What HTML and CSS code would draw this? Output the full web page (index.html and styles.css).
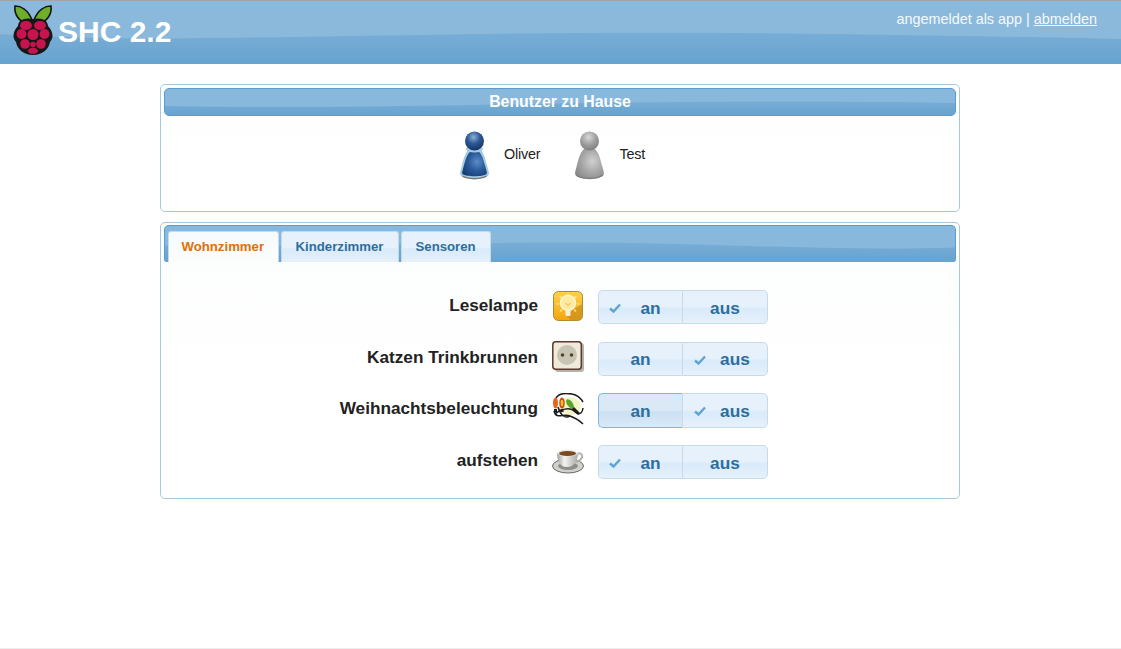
FILE: index.html
```html
<!DOCTYPE html>
<html lang="de">
<head>
<meta charset="UTF-8">
<title>SHC 2.2</title>
<link rel="stylesheet" href="styles.css">
</head>
<body>
<svg width="0" height="0" class="defs">
	<defs>
		<linearGradient id="waveFill" x1="0" y1="0" x2="0" y2="1"><stop offset="0" stop-color="#78add5"/><stop offset="1" stop-color="#66a3d0"/></linearGradient>
		<radialGradient id="blueHead" cx="0.45" cy="0.3" r="0.75"><stop offset="0" stop-color="#8fb0d6"/><stop offset="0.45" stop-color="#2c5a98"/><stop offset="1" stop-color="#14305c"/></radialGradient>
		<radialGradient id="blueBody" cx="0.6" cy="0.45" r="0.7"><stop offset="0" stop-color="#5c8cc4"/><stop offset="0.5" stop-color="#2a5a9a"/><stop offset="1" stop-color="#163a70"/></radialGradient>
		<radialGradient id="greyHead" cx="0.45" cy="0.3" r="0.75"><stop offset="0" stop-color="#d8d8d8"/><stop offset="0.55" stop-color="#9c9c9c"/><stop offset="1" stop-color="#7a7a7a"/></radialGradient>
		<radialGradient id="greyBody" cx="0.6" cy="0.45" r="0.7"><stop offset="0" stop-color="#d0d0d0"/><stop offset="0.55" stop-color="#a4a4a4"/><stop offset="1" stop-color="#868686"/></radialGradient>
		<linearGradient id="bulbBg" x1="0" y1="0" x2="0" y2="1"><stop offset="0" stop-color="#ffd24a"/><stop offset="1" stop-color="#f5a40c"/></linearGradient>
		<linearGradient id="cupBody" x1="0" y1="0" x2="1" y2="0"><stop offset="0" stop-color="#9c9c98"/><stop offset="0.35" stop-color="#f4f4f2"/><stop offset="1" stop-color="#a8a8a4"/></linearGradient>
	</defs>
</svg>

<div class="header">
	<svg class="wave" viewBox="0 0 1121 63" preserveAspectRatio="none">
		<path d="M0 33 C120 41 260 36 420 34 C620 30 800 31 1121 38 L1121 63 L0 63Z" fill="url(#waveFill)"/>
	</svg>
	<div class="logo">
		<svg width="40" height="50" viewBox="0 0 40 50">
			<path d="M19 15C15 5 8 1 2 1C1 9 6 17 13 17C15 17 17 16 19 15Z" fill="#6fae2a" stroke="#141414" stroke-width="1.600"/>
			<path d="M21 15C25 5 32 1 38 1C39 9 34 17 27 17C25 17 23 16 21 15Z" fill="#6fae2a" stroke="#141414" stroke-width="1.600"/>
			<path d="M20 14C28 12 35 15 35 21C40 26 41 33 37 37C36 44 29 50 20 50C11 50 4 44 3 37C-1 33 0 26 5 21C5 15 12 12 20 14Z" fill="#171717"/>
			<ellipse cx="13" cy="20.500" rx="6" ry="4.500" fill="#c8144e"/>
			<ellipse cx="27" cy="20.500" rx="6" ry="4.500" fill="#c8144e"/>
			<circle cx="20" cy="29.500" r="5.500" fill="#c8144e"/>
			<circle cx="8.500" cy="29" r="5" fill="#c8144e"/>
			<circle cx="31.500" cy="29" r="5" fill="#c8144e"/>
			<circle cx="12" cy="39" r="4.800" fill="#c8144e"/>
			<circle cx="28" cy="39" r="4.800" fill="#c8144e"/>
			<circle cx="20" cy="39.500" r="2.800" fill="#c8144e"/>
			<ellipse cx="20" cy="45.800" rx="5" ry="3" fill="#c8144e"/>
		</svg>
		<h1>SHC 2.2</h1>
	</div>
	<div class="login">angemeldet als app | <a href="#">abmelden</a></div>
</div>

<div class="box box-users">
	<div class="box-title">
		<svg class="wave" viewBox="0 0 790 26" preserveAspectRatio="none"><path d="M0 17C150 20 300 16 420 14C560 12 680 12 790 14L790 26L0 26Z" fill="url(#waveFill)"/></svg>
		<span>Benutzer zu Hause</span>
	</div>
	<div class="users">
		<div class="user">
			<svg width="32" height="50" viewBox="1.500 0 32 50">
				<path d="M16 17C7 17 5 30 3 37C2 41 1 43 2 45C5 50 27 50 30 45C31 43 30 41 29 37C27 30 25 17 16 17Z" fill="#a4cbdf"/>
				<path d="M16 20C9 20 7 30 5 37C4 41 3 43 4 44C7 47 25 47 28 44C29 43 28 41 27 37C25 30 23 20 16 20Z" fill="url(#blueBody)"/>
				<path d="M4 46C9 49.500 23 49.500 28 46" fill="none" stroke="#777" stroke-width="1.500"/>
				<ellipse cx="16" cy="19" rx="8.500" ry="3.500" fill="#a4cbdf"/>
				<circle cx="16" cy="11" r="9.500" fill="url(#blueHead)"/>
			</svg>
			<span>Oliver</span>
		</div>
		<div class="user">
			<svg width="32" height="50" viewBox="1.500 0 32 50">
				<path d="M16 17C7 17 5 30 3 37C2 41 1 43 2 45C5 50 27 50 30 45C31 43 30 41 29 37C27 30 25 17 16 17Z" fill="url(#greyBody)"/>
				<path d="M3 45C8 49.500 24 49.500 29 45" fill="none" stroke="#7e7e7e" stroke-width="1.500"/>
				<circle cx="16" cy="11" r="9.500" fill="url(#greyHead)"/>
			</svg>
			<span>Test</span>
		</div>
	</div>
</div>

<div class="box box-rooms">
	<div class="tabbar">
		<svg class="wave" viewBox="0 0 792 37" preserveAspectRatio="none"><path d="M0 20C200 22 300 16 420 17C560 18 680 26 792 22L792 37L0 37Z" fill="url(#waveFill)"/></svg>
		<a class="tab tab-active" href="#">Wohnzimmer</a>
		<a class="tab" href="#">Kinderzimmer</a>
		<a class="tab" href="#">Sensoren</a>
	</div>
	<div class="rows">
		<div class="row-label">Leselampe</div>
		<svg class="row-icon" width="32" height="32" viewBox="0 0 32 32">
			<rect x="1.500" y="1.500" width="29" height="29" rx="5" fill="url(#bulbBg)" stroke="#a88a3c"/>
			<path d="M20 20L30.500 14V26Q30.500 30.500 26 30.500H19L15 26Z" fill="#c98f1e" opacity="0.7"/>
			<path d="M16 3V6M8 6L10 9M24 6L22 9M4.500 14H7M25 14H27.500M8 21.500L10 19.500M24 21.500L22 19.500" stroke="#ffe690" stroke-width="1.500"/>
			<circle cx="16" cy="13" r="7.500" fill="#ffeaa0" stroke="#fff6d2" stroke-width="1.500"/>
			<rect x="13.500" y="20" width="5" height="6" rx="1.500" fill="#f4f0e4"/>
			<path d="M13.500 13L16 15.500L18.500 13" fill="none" stroke="#e2b640"/>
		</svg>
		<div class="switch">
			<a class="seg seg-on" href="#"><svg class="check" width="12" height="10" viewBox="0 0 12 10"><path d="M1 5.500L4.500 8.500L11 1.500" fill="none" stroke="#5fa3d3" stroke-width="2.400"/></svg>an</a>
			<a class="seg" href="#">aus</a>
		</div>

		<div class="row-label">Katzen Trinkbrunnen</div>
		<svg class="row-icon" width="32" height="32" viewBox="0 0 32 32">
			<rect x="3" y="2" width="29" height="29" rx="3" fill="#b5b2aa"/>
			<rect x="0.800" y="0.800" width="28.500" height="27.500" rx="3" fill="#eeebdd" stroke="#5a3a2a" stroke-width="1.500"/>
			<circle cx="15" cy="14" r="10" fill="#c9c5b5"/>
			<circle cx="10.500" cy="14" r="1.800" fill="#5a3a2a"/>
			<circle cx="19.500" cy="14" r="1.800" fill="#5a3a2a"/>
		</svg>
		<div class="switch">
			<a class="seg" href="#">an</a>
			<a class="seg seg-on" href="#"><svg class="check" width="12" height="10" viewBox="0 0 12 10"><path d="M1 5.500L4.500 8.500L11 1.500" fill="none" stroke="#5fa3d3" stroke-width="2.400"/></svg>aus</a>
		</div>

		<div class="row-label">Weihnachtsbeleuchtung</div>
		<svg class="row-icon" width="32" height="32" viewBox="0 0 32 32">
			<ellipse cx="18" cy="13" rx="11" ry="9" fill="#f3f5c4"/>
			<path d="M4 5C7 0 14 0 20 1C25 2 28 4 31 9M2 18C4 27 12 20 18 23C23 25 27 27 31 31M3 21C8 16 18 14 22 18C26 22 30 22 31 15M6 14C8 21 12 26 18 23" fill="none" stroke="#1c1c1c" stroke-width="1.500"/>
			<ellipse cx="3.500" cy="10" rx="2.500" ry="5.500" fill="#e8641c"/>
			<ellipse cx="10" cy="10" rx="2.800" ry="5.500" fill="#d8481a"/>
			<ellipse cx="10" cy="10" rx="1.300" ry="3.200" fill="#f2c81e"/>
			<ellipse cx="18" cy="11" rx="2.800" ry="5.500" fill="#5aa52a" transform="rotate(-35 18 11)"/>
			<path d="M21 15L27 21" stroke="#1c1c1c" stroke-width="2.800"/>
			<path d="M3.500 16V19M10 16V19" stroke="#1c1c1c" stroke-width="3"/>
		</svg>
		<div class="switch">
			<a class="seg seg-hover" href="#">an</a>
			<a class="seg seg-on" href="#"><svg class="check" width="12" height="10" viewBox="0 0 12 10"><path d="M1 5.500L4.500 8.500L11 1.500" fill="none" stroke="#5fa3d3" stroke-width="2.400"/></svg>aus</a>
		</div>

		<div class="row-label">aufstehen</div>
		<svg class="row-icon" width="32" height="32" viewBox="0 0 32 32">
			<ellipse cx="16" cy="21" rx="15.500" ry="7" fill="#d0d0cc" stroke="#6a6a66"/>
			<ellipse cx="16" cy="21" rx="10" ry="4" fill="#8e8e8a"/>
			<path d="M25 9C31 6 33 14 24 17" fill="none" stroke="#b4b4b0" stroke-width="2"/>
			<path d="M5 8C5 14 7 22 15 22C23 22 26 14 26 8Z" fill="url(#cupBody)"/>
			<ellipse cx="15.500" cy="8" rx="10.500" ry="3.500" fill="#e8e8e4"/>
			<ellipse cx="15.500" cy="8.500" rx="8.500" ry="2.500" fill="#7a4a1e"/>
		</svg>
		<div class="switch">
			<a class="seg seg-on" href="#"><svg class="check" width="12" height="10" viewBox="0 0 12 10"><path d="M1 5.500L4.500 8.500L11 1.500" fill="none" stroke="#5fa3d3" stroke-width="2.400"/></svg>an</a>
			<a class="seg" href="#">aus</a>
		</div>
	</div>
</div>
</body>
</html>
```
FILE: styles.css
```css
* {margin:0; padding:0; box-sizing:border-box;}
html, body {background:#fff;}
body {font-family:"Liberation Sans", Arial, sans-serif; color:#222; height:649px; border-bottom:1px solid #eee; overflow:hidden;}
a {color:inherit;}
.defs {position:absolute;}

.wave {position:absolute; left:0; top:0; width:100%; height:100%;}

/* header */
.header {position:relative; height:64px; border-top:1px solid #a3a3a3; background:#8bb9dc; display:flex; justify-content:space-between; color:#fff;}
.logo {position:relative; display:flex; align-items:flex-start; gap:5px; padding:4px 0 0 13px;}
.logo h1 {font-size:30px; font-weight:bold; line-height:46px; margin-top:4px;}
.login {position:relative; font-size:14.4px; padding:10px 24px 0 0; color:#f6f9fc;}

/* boxes */
.box {width:800px; margin-left:160px; border:1px solid #a6c9e2; border-radius:5px; background:linear-gradient(#fcfdfd, #fff 60%);}
.box-users {height:128px; margin-top:20px; padding:3px;}
.box-rooms {height:277px; margin-top:10px; padding:2px 3px 0;}

.box-title {position:relative; height:28px; border:1px solid #5c9ccc; border-radius:5px; background:#88b8dc; overflow:hidden; text-align:center; color:#fff; font-size:15.84px; font-weight:bold; line-height:25px;}
.box-title span {position:relative;}

.users {display:flex; justify-content:center; gap:35px; padding:14px 15px 0 0;}
.user {display:flex; align-items:center; gap:12px; font-size:14.4px; letter-spacing:-0.2px; color:#222;}
.user span {padding-bottom:2px;}

/* tabs */
.tabbar {position:relative; height:37px; border:1px solid #5c9ccc; border-bottom:0; border-radius:5px 5px 3px 3px; background:#88b8dc; display:flex; gap:2px; padding:5px 0 0 3px; overflow:hidden;}
.tab {position:relative; height:32px; padding:0 14px; border:1px solid #c5dbec; border-bottom:0; border-radius:3px 3px 0 0; background:linear-gradient(#e6f1fb 50%, #d9eafa 55%, #e6f1fb 100%); color:#2e6e9e; font-size:13.2px; font-weight:bold; line-height:29px; text-decoration:none;}
.tab-active {background:linear-gradient(#f6fafd, #fcfdfd); color:#e17009; height:33px; padding:0 13.5px 0 12.5px;}

/* rows */
.rows {display:grid; grid-template-columns:374px 32px 170px; column-gap:14px; row-gap:17.34px; align-items:center; padding-top:28px;}
.row-label {grid-column:1; text-align:right; font-size:17.2px; font-weight:bold; color:#222; padding-bottom:3px;}
.row-icon {display:block; margin-top:-3px;}
.switch {display:grid; grid-template-columns:84px 86px; height:34.33px;}
.seg {position:relative; display:flex; align-items:center; justify-content:center; padding-top:2px; border:1px solid #c5dbec; background:linear-gradient(#e6f1fb 48%, #d9eafa 55%, #e6f1fb 100%); color:#2e6e9e; font-size:17.28px; font-weight:bold; text-decoration:none;}
.seg:first-child {border-radius:5px 0 0 5px; border-right:0;}
.seg:last-child {border-radius:0 5px 5px 0;}
.seg-on {padding-left:20px;}
.check {position:absolute; left:10px; top:12px;}
.seg:last-child .check {left:11px;}
.seg-hover {background:linear-gradient(#dbe9f6 48%, #cbe0f3 55%, #dbe9f6 100%); border-color:#79b7e7;}
```
